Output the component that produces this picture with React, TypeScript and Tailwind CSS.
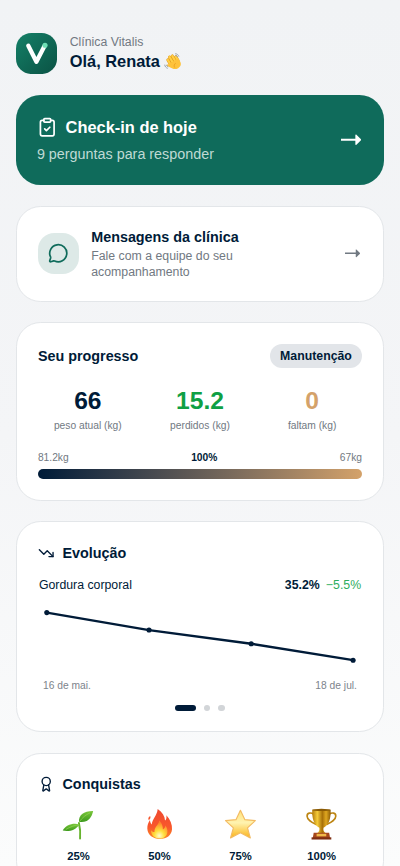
import type { ReactNode } from "react";
import { Award, ClipboardCheck, MessageCircle, TrendingDown } from "lucide-react";
import clsx from "clsx";

interface CardProps {
  children: ReactNode;
  className?: string;
}

function Card({ children, className }: CardProps) {
  return (
    <section className={clsx("rounded-3xl border border-[#e3e6e9] bg-white p-5", className)}>
      {children}
    </section>
  );
}

function Logo() {
  return (
    <svg viewBox="0 0 40 40" className="h-10 w-10 shrink-0">
      <defs>
        <linearGradient id="logo-bg" x1="0" y1="0" x2="1" y2="1">
          <stop offset="0" stopColor="#148067" />
          <stop offset="1" stopColor="#0b5244" />
        </linearGradient>
      </defs>
      <rect width="40" height="40" rx="15" fill="url(#logo-bg)" />
      <path
        d="M12 12.4 19.9 28 27.8 12.6"
        fill="none"
        stroke="#fff"
        strokeWidth="4.2"
        strokeLinecap="round"
        strokeLinejoin="round"
      />
      <circle cx="28.3" cy="12" r="2.5" fill="#6fe0b5" />
    </svg>
  );
}

function Arrow({ className }: { className?: string }) {
  return (
    <svg viewBox="0 0 20 12" className={className} fill="currentColor">
      <path d="M0 4.600h14V.8l.8-.3 4.700 4.600v1L14.800 10.700l-.8-.3V6.600H0z" />
    </svg>
  );
}

function Wave() {
  return (
    <svg viewBox="0 0 36 36" className="h-[17px] w-[17px]">
      <g transform="rotate(-30 20 20)">
        <g stroke="#e39a1c" strokeWidth="6.2" strokeLinecap="round">
          <path d="M12.500 20V9M18.500 19V5.500M24.500 19V6.500M30 21v-9.500" />
        </g>
        <g stroke="#ffcf45" strokeWidth="4.4" strokeLinecap="round">
          <path d="M12.500 20V9M18.500 19V5.500M24.500 19V6.500M30 21v-9.500" />
        </g>
        <path
          d="M9.800 17.500h22.900v7c0 6.500-4.200 10-10.500 10-5.500 0-8.200-2.500-11-6.500l-5.700-7.700c-1.700-2.500 1.300-4.600 3.500-2.600z"
          fill="#fec23a"
        />
        <path d="M17 30c-.5-4 2-6.500 6-7" fill="none" stroke="#e39a1c" strokeWidth="1.4" />
      </g>
      <g fill="none" stroke="#98a1aa" strokeWidth="2" strokeLinecap="round">
        <path d="M24 1.500c3 .3 5.500 2.300 6.500 5M24.500 5c1.500.4 2.600 1.300 3.300 2.800" />
        <path d="M1.500 25c.6 3.200 2.600 5.500 5.500 6.500M5 25c.6 1.600 1.600 2.600 3 3.200" />
      </g>
    </svg>
  );
}

function Seedling() {
  return (
    <svg viewBox="0 0 36 36" className="h-[34px] w-[34px]">
      <defs>
        <linearGradient id="leaf" x1="0" y1="0" x2="0" y2="1">
          <stop offset="0" stopColor="#79c63a" />
          <stop offset="1" stopColor="#3d9a1d" />
        </linearGradient>
      </defs>
      <path
        d="M18.500 16.500c1.300 5 1.700 10 1.200 16"
        fill="none"
        stroke="#67b32e"
        strokeWidth="2"
        strokeLinecap="round"
      />
      <path
        d="M18.600 15.300c-.6-6.500 4.400-11.100 14.600-11.100-1.600 7.600-6.300 12.600-14.600 11.100z"
        fill="url(#leaf)"
      />
      <path
        d="M19 18c-6.300-2.200-14.500.6-17.200 6.300 6.300 1.600 13.800-.6 17.200-6.300z"
        fill="url(#leaf)"
      />
      <path
        d="M19 15.200c3-4.300 6.500-7 11-9.200M18.500 18.300c-4.500.6-9 2.200-13.500 4.900"
        fill="none"
        stroke="#a2dc5c"
        strokeWidth=".6"
      />
    </svg>
  );
}

function Fire() {
  return (
    <svg viewBox="0 0 36 36" className="h-[34px] w-[34px]">
      <defs>
        <linearGradient id="flame" x1="0" y1="0" x2="0" y2="1">
          <stop offset="0" stopColor="#ee4a30" />
          <stop offset=".6" stopColor="#f9572c" />
          <stop offset="1" stopColor="#fb8a25" />
        </linearGradient>
        <radialGradient id="flame-core" cx=".5" cy=".85" r=".75">
          <stop offset="0" stopColor="#fffbd0" />
          <stop offset=".4" stopColor="#ffdf3c" />
          <stop offset="1" stopColor="#fd7f2b" />
        </radialGradient>
      </defs>
      <path
        d="M16.200 2c4.800 3 7.300 7.200 7.600 12 1.400-1 1.700-2.800 1.400-5.500 3.800 4.500 6.200 9.500 5.800 14.500-.5 6.300-5.500 10-12.500 10S5.800 29 5.500 22.500c-.1-3.500 1-6.500 2.700-9 .1 2 .7 3.400 1.900 4.500C10.500 12.500 15.500 9 16.200 2z"
        fill="url(#flame)"
      />
      <path d="M8.500 9.300c-1.700.8-2.500 2.300-1.600 4.200 1.400-.7 2.200-2.100 1.600-4.200z" fill="#f5552c" />
      <path
        d="M17.800 14c2.800 2.800 3.800 5.700 3.800 9.200 1.500-.9 2.300-2.300 2.700-4.200 2.300 3.200 2.600 7 1.100 9.800-1.400 2.600-4 3.700-7.200 3.700-5 0-8.900-2.800-8.900-8.500 1.100 1.300 2.200 1.900 3.600 1.900-.4-5.300 4.300-7 4.900-11.900z"
        fill="url(#flame-core)"
      />
    </svg>
  );
}

function Star() {
  return (
    <svg viewBox="0 0 36 36" className="h-[34px] w-[34px]">
      <defs>
        <linearGradient id="star" x1="0" y1="0" x2="0" y2="1">
          <stop offset="0" stopColor="#ffe27a" />
          <stop offset=".45" stopColor="#fff3b0" />
          <stop offset="1" stopColor="#fbb416" />
        </linearGradient>
      </defs>
      <path
        d="M18 3.400l4.600 9.700 10.800.9-8.100 7.600 2.900 10.400L18 26.700 7.800 32l2.900-10.400L2.600 14l10.800-.9z"
        fill="url(#star)"
        stroke="#f3bb62"
        strokeWidth="1.2"
        strokeLinejoin="round"
      />
    </svg>
  );
}

function Trophy() {
  return (
    <svg viewBox="0 0 36 36" className="h-[34px] w-[34px]">
      <defs>
        <linearGradient id="cup" x1="0" y1="0" x2="1" y2="0">
          <stop offset="0" stopColor="#b47c0b" />
          <stop offset=".28" stopColor="#f5cb38" />
          <stop offset=".55" stopColor="#a87008" />
          <stop offset=".75" stopColor="#dfa720" />
          <stop offset="1" stopColor="#8d5c06" />
        </linearGradient>
      </defs>
      <g fill="none" stroke="#bd8512" strokeWidth="1.7">
        <path d="M10 7.500C7 5.200 3 6 3.200 9.500c.2 4.200 4.800 6.300 9.600 8.700" />
        <path d="M26 7.500c3-2.300 7-1.500 6.800 2-.2 4.200-4.800 6.300-9.600 8.700" />
      </g>
      <path
        d="M8.500 2.800h19c.3 9.500-1.700 15.500-7.300 18.500-.5 2 0 4.200 2.300 5.700h-9c2.300-1.500 2.800-3.700 2.300-5.700C10.200 18.300 8.200 12.300 8.500 2.800z"
        fill="url(#cup)"
      />
      <ellipse cx="18" cy="3" rx="9.500" ry="1.100" fill="#8a5a05" />
      <path d="M10 26.500h16l1 6H9z" fill="#a6471c" />
      <path d="M7.800 31.300h20.400v2.300H7.800z" fill="#7f2e12" />
      <path d="M13 27.700h10v2.600H13z" fill="#f0b94a" />
    </svg>
  );
}

const STATS = [
  { value: "66", label: "peso atual (kg)", color: "text-[#001b38]" },
  { value: "15.2", label: "perdidos (kg)", color: "text-[#0fa044]" },
  { value: "0", label: "faltam (kg)", color: "text-[#d4a26a]" },
];

// pontos do gráfico de gordura corporal
const POINTS = [
  { x: 8.5, y: 16.2 },
  { x: 108.2, y: 33.2 },
  { x: 207.8, y: 46.6 },
  { x: 307.2, y: 62.6 },
];

const ACHIEVEMENTS = [
  { icon: <Seedling />, label: "25%" },
  { icon: <Fire />, label: "50%" },
  { icon: <Star />, label: "75%" },
  { icon: <Trophy />, label: "100%" },
];

export default function App() {
  return (
    <div className="h-screen overflow-hidden bg-linear-to-b from-[#f1f3f5] via-[#f4f5f7] to-[#fbfcfc] font-['Liberation_Sans',Arial,sans-serif] text-[#001b38]">
      <main className="flex flex-col gap-5 px-4 pt-[32.5px] [zoom:1.0256]">
        <header className="flex items-center gap-3">
          <Logo />
          <div>
            <p className="text-xs text-[#717982]">Clínica Vitalis</p>
            <h1 className="-mt-px flex items-center gap-1 text-base font-bold">
              Olá, Renata <Wave />
            </h1>
          </div>
        </header>

        <button
          type="button"
          className="flex items-center justify-between rounded-3xl bg-[#0f6b5b] p-5 text-left text-white"
        >
          <div>
            <div className="flex items-center gap-2">
              <ClipboardCheck className="h-5 w-5" />
              <span className="text-base font-bold">Check-in de hoje</span>
            </div>
            <p className="mt-1 text-sm text-[#bfdad4]">9 perguntas para responder</p>
          </div>
          <Arrow className="mr-0.5 h-3 w-5" />
        </button>

        <Card className="flex items-center gap-3">
          <div className="flex h-10 w-10 shrink-0 items-center justify-center rounded-2xl bg-[#dde9e7] text-[#0f6b5b]">
            <MessageCircle className="h-5 w-5" />
          </div>
          <div className="flex-1">
            <h2 className="text-sm font-bold">Mensagens da clínica</h2>
            <p className="w-[170px] text-xs text-[#717982]">
              Fale com a equipe do seu acompanhamento
            </p>
          </div>
          <Arrow className="mr-0.5 h-[9px] w-[15px] text-[#717982]" />
        </Card>

        <Card>
          <div className="flex items-center justify-between">
            <h2 className="text-sm font-bold">Seu progresso</h2>
            <span className="rounded-full bg-[#e2e5e9] px-2.5 py-1 text-xs font-bold">
              Manutenção
            </span>
          </div>

          <div className="mt-4 grid grid-cols-3 gap-3 text-center">
            {STATS.map((stat) => (
              <div key={stat.label}>
                <p className={clsx("text-2xl font-bold", stat.color)}>{stat.value}</p>
                <p className="text-[10px] leading-[15px] text-[#717982]">{stat.label}</p>
              </div>
            ))}
          </div>

          <div className="mt-[17px] flex justify-between text-[10px] leading-[15px] text-[#717982]">
            <span>81.2kg</span>
            <span className="font-bold text-[#001b38]">100%</span>
            <span>67kg</span>
          </div>
          <div className="mt-[3px] h-2.5 rounded-full bg-linear-to-r from-[#001b38] to-[#d4a26a]" />
        </Card>

        <Card>
          <h2 className="flex items-center gap-2 text-sm font-bold">
            <TrendingDown className="h-4 w-4" />
            Evolução
          </h2>

          <div className="mt-[13px] flex justify-between px-px text-xs">
            <span>Gordura corporal</span>
            <span className="flex gap-1.5">
              <b className="font-bold">35.2%</b>
              <span className="text-[#2fad5e]">−5.5%</span>
            </span>
          </div>

          <svg viewBox="0 0 316 76" className="mt-[3px] block h-[76px] w-full">
            <polyline
              points={POINTS.map((p) => `${p.x},${p.y}`).join(" ")}
              fill="none"
              stroke="#001b38"
              strokeWidth="2.3"
              strokeLinejoin="round"
            />
            {POINTS.map((p) => (
              <circle key={p.x} cx={p.x} cy={p.y} r="2.5" fill="#001b38" />
            ))}
          </svg>
          <div className="mt-1 flex justify-between px-[5px] text-[10px] leading-[15px] text-[#7d848c]">
            <span>16 de mai.</span>
            <span>18 de jul.</span>
          </div>

          <div className="mt-[11px] flex justify-center gap-2">
            <span className="h-1.5 w-5 rounded-full bg-[#001b38]" />
            <span className="h-1.5 w-1.5 rounded-full bg-[#d2d5d8]" />
            <span className="h-1.5 w-1.5 rounded-full bg-[#d2d5d8]" />
          </div>
        </Card>

        <Card>
          <h2 className="flex items-center gap-2 text-sm font-bold">
            <Award className="h-4 w-4" />
            Conquistas
          </h2>
          <div className="mt-3 grid grid-cols-4">
            {ACHIEVEMENTS.map((item) => (
              <div key={item.label} className="flex flex-col items-center">
                {item.icon}
                <span className="mt-1.5 text-[11px] leading-4 font-bold">{item.label}</span>
              </div>
            ))}
          </div>
        </Card>
      </main>
    </div>
  );
}
